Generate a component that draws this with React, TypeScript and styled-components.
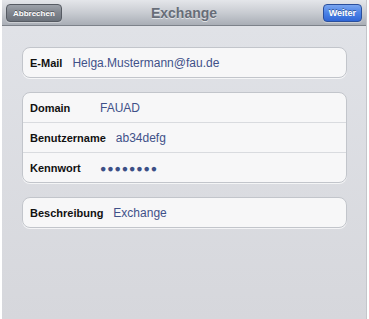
import React from "react";
import styled, { createGlobalStyle } from "styled-components";

const Global = createGlobalStyle`
  html, body { margin: 0; padding: 0; background: #ffffff; }
  body { font-family: "Liberation Sans", Arial, Helvetica, sans-serif; }
`;

const Frame = styled.div`
  width: 369px;
  height: 319px;
  padding: 0 2px 0 2px;
  box-sizing: border-box;
  display: flex;
`;

const Screen = styled.div`
  flex: 1;
  display: flex;
  flex-direction: column;
  background: linear-gradient(#e1e3e8, #d6d7dc);
  border-right: 1px solid #c4c6cb;
`;

const NavBar = styled.div`
  height: 26px;
  box-sizing: border-box;
  display: grid;
  grid-template-columns: 1fr auto 1fr;
  align-items: center;
  padding: 0 4px 0 4px;
  background: linear-gradient(#e4e6ea 0%, #c9ccd2 50%, #a9aeb6 100%);
  border-bottom: 1px solid #7d828a;
`;

const Title = styled.div`
  font-weight: bold;
  font-size: 14px;
  color: #676d78;
  text-shadow: 0 1px 0 rgba(255, 255, 255, 0.6);
  padding-top: 1px;
`;

const NavButton = styled.button<{ $primary?: boolean; $size: number }>`
  justify-self: ${(p) => (p.$primary ? "end" : "start")};
  height: 18px;
  margin-top: 1px;
  padding: 0 ${(p) => (p.$primary ? "5px" : "6px")};
  border-radius: 4px;
  font-family: "Liberation Sans", Arial, sans-serif;
  font-weight: bold;
  font-size: ${(p) => p.$size}px;
  color: #fff;
  text-shadow: 0 -1px 0 rgba(0, 0, 0, 0.4);
  border: 1px solid ${(p) => (p.$primary ? "#2a4f9c" : "#565b63")};
  background: ${(p) =>
    p.$primary
      ? "linear-gradient(#7aa6f0 0%, #4b82e6 50%, #2f66d6 100%)"
      : "linear-gradient(#9da2aa 0%, #80858e 50%, #6b717a 100%)"};
  box-shadow: 0 1px 0 rgba(255, 255, 255, 0.35);
  cursor: pointer;
`;

const Content = styled.div`
  display: flex;
  flex-direction: column;
  gap: 14px;
  padding: 21px 19px 0 20px;
`;

const Group = styled.div`
  background: #f7f7f8;
  border: 1px solid #c2c5cb;
  border-radius: 8px;
  display: flex;
  flex-direction: column;
  box-shadow: 0 1px 0 rgba(255, 255, 255, 0.7);
`;

const Row = styled.div`
  height: 29px;
  display: flex;
  align-items: center;
  gap: 10px;
  padding: 0 8px 0 7px;
  & + & {
    border-top: 1px solid #d9dbdf;
  }
`;

const Label = styled.span<{ $min?: number }>`
  font-weight: bold;
  font-size: 11px;
  color: #111;
  min-width: ${(p) => (p.$min ? `${p.$min}px` : "auto")};
`;

const Value = styled.span`
  font-size: 12px;
  color: #3f5189;
`;

const Dots = styled.span`
  font-size: 10.5px;
  letter-spacing: 0.9px;
  color: #3c4f86;
`;

export default function App() {
  return (
    <>
      <Global />
      <Frame>
        <Screen>
          <NavBar>
            <NavButton $size={8}>Abbrechen</NavButton>
            <Title>Exchange</Title>
            <NavButton $primary $size={9}>Weiter</NavButton>
          </NavBar>
          <Content>
            <Group>
              <Row>
                <Label>E-Mail</Label>
                <Value>Helga.Mustermann@fau.de</Value>
              </Row>
            </Group>
            <Group>
              <Row>
                <Label $min={60}>Domain</Label>
                <Value>FAUAD</Value>
              </Row>
              <Row>
                <Label>Benutzername</Label>
                <Value>ab34defg</Value>
              </Row>
              <Row>
                <Label $min={60}>Kennwort</Label>
                <Dots>●●●●●●●●</Dots>
              </Row>
            </Group>
            <Group>
              <Row>
                <Label>Beschreibung</Label>
                <Value>Exchange</Value>
              </Row>
            </Group>
          </Content>
        </Screen>
      </Frame>
    </>
  );
}
